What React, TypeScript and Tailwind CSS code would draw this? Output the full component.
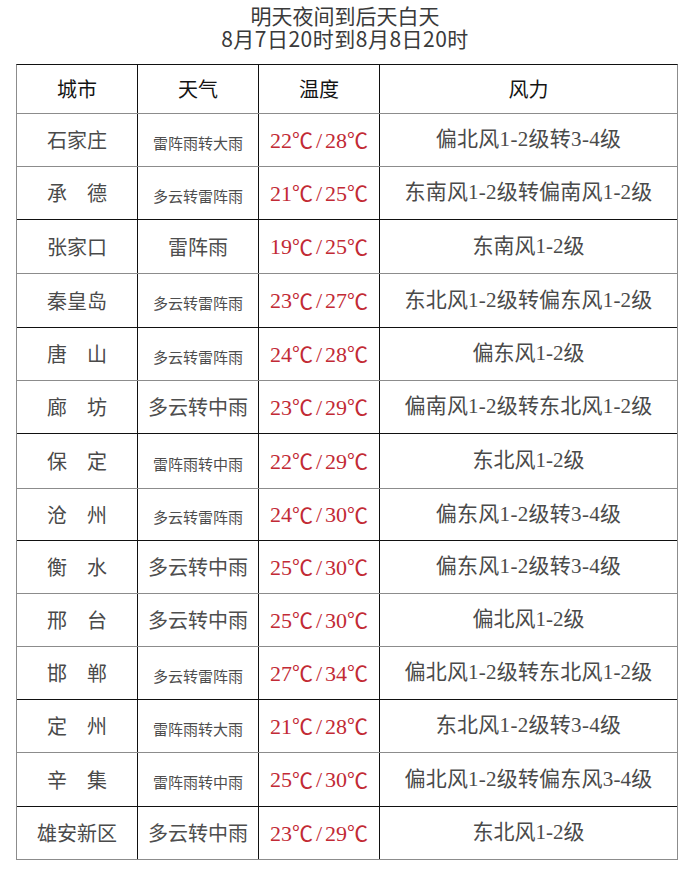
import React from "react";

type Row = {
  city: string;
  weather: string;
  small: boolean;
  lo: string;
  hi: string;
  wind: string;
  track: string;
  h: string;
  line: string;
};

const rows: Row[] = [
  { city: "石家庄", weather: "雷阵雨转大雨", small: true, lo: "22", hi: "28", wind: "偏北风1-2级转3-4级", track: "tracking-[0.3px]", h: "h-[53px]", line: "border-[#8c8c8c]" },
  { city: "承　德", weather: "多云转雷阵雨", small: true, lo: "21", hi: "25", wind: "东南风1-2级转偏南风1-2级", track: "tracking-[0.2px]", h: "h-[53px]", line: "border-[#111111]" },
  { city: "张家口", weather: "雷阵雨", small: false, lo: "19", hi: "25", wind: "东南风1-2级", track: "tracking-[0px]", h: "h-[54px]", line: "border-[#8c8c8c]" },
  { city: "秦皇岛", weather: "多云转雷阵雨", small: true, lo: "23", hi: "27", wind: "东北风1-2级转偏东风1-2级", track: "tracking-[0.2px]", h: "h-[54px]", line: "border-[#111111]" },
  { city: "唐　山", weather: "多云转雷阵雨", small: true, lo: "24", hi: "28", wind: "偏东风1-2级", track: "tracking-[0px]", h: "h-[53px]", line: "border-[#8c8c8c]" },
  { city: "廊　坊", weather: "多云转中雨", small: false, lo: "23", hi: "29", wind: "偏南风1-2级转东北风1-2级", track: "tracking-[0.2px]", h: "h-[53px]", line: "border-[#111111]" },
  { city: "保　定", weather: "雷阵雨转中雨", small: true, lo: "22", hi: "29", wind: "东北风1-2级", track: "tracking-[0px]", h: "h-[55px]", line: "border-[#8c8c8c]" },
  { city: "沧　州", weather: "多云转雷阵雨", small: true, lo: "24", hi: "30", wind: "偏东风1-2级转3-4级", track: "tracking-[0.3px]", h: "h-[52px]", line: "border-[#111111]" },
  { city: "衡　水", weather: "多云转中雨", small: false, lo: "25", hi: "30", wind: "偏东风1-2级转3-4级", track: "tracking-[0.3px]", h: "h-[53px]", line: "border-[#8c8c8c]" },
  { city: "邢　台", weather: "多云转中雨", small: false, lo: "25", hi: "30", wind: "偏北风1-2级", track: "tracking-[0px]", h: "h-[53px]", line: "border-[#8c8c8c]" },
  { city: "邯　郸", weather: "多云转雷阵雨", small: true, lo: "27", hi: "34", wind: "偏北风1-2级转东北风1-2级", track: "tracking-[0.2px]", h: "h-[53px]", line: "border-[#111111]" },
  { city: "定　州", weather: "雷阵雨转大雨", small: true, lo: "21", hi: "28", wind: "东北风1-2级转3-4级", track: "tracking-[0.3px]", h: "h-[53px]", line: "border-[#8c8c8c]" },
  { city: "辛　集", weather: "雷阵雨转中雨", small: true, lo: "25", hi: "30", wind: "偏北风1-2级转偏东风3-4级", track: "tracking-[0.2px]", h: "h-[54px]", line: "border-[#111111]" },
  { city: "雄安新区", weather: "多云转中雨", small: false, lo: "23", hi: "29", wind: "东北风1-2级", track: "tracking-[0px]", h: "h-[53px]", line: "border-[#8c8c8c]" },
];

const cjk = "font-['Noto_Sans_CJK_SC',sans-serif]";
const mixed = "font-['Liberation_Serif','Noto_Sans_CJK_SC',serif]";

function Deg() {
  return <span className="font-['Noto_Sans_CJK_SC',sans-serif] text-[21px]">℃</span>;
}

export default function App() {
  return (
    <div className="w-[690px] h-[892px] bg-white overflow-hidden">
      <div className={`pt-[4px] flex flex-col items-center text-[21px] leading-[23px] text-[#3a3a3a] ${cjk}`}>
        <div>明天夜间到后天白天</div>
        <div className="tracking-[0.5px]">8月7日20时到8月8日20时</div>
      </div>
      <div className="mt-[14px] ml-[16px] w-[662px] border-t border-l border-r border-t-[#111111] border-l-[#8c8c8c] border-r-[#8c8c8c]">
        <div className={`flex h-[49px] border-b border-[#8c8c8c] text-[20px] text-[#141414] ${cjk}`}>
          <div className="w-[121px] border-r border-[#111111] flex items-center justify-center">城市</div>
          <div className="w-[121px] border-r border-[#111111] flex items-center justify-center">天气</div>
          <div className="w-[121px] border-r border-[#111111] flex items-center justify-center">温度</div>
          <div className="flex-1 flex items-center justify-center">风力</div>
        </div>
        {rows.map((r, i) => (
          <div key={i} className={`flex ${r.h} border-b ${r.line}`}>
            <div className={`w-[121px] border-r border-[#111111] flex items-center justify-center text-[20px] text-[#4a4a4a] ${cjk}`}>
              {r.city}
            </div>
            <div
              className={`w-[121px] border-r border-[#111111] flex items-center justify-center text-[#4e4e4e] ${cjk} ${
                r.small ? "text-[15px] pt-[6px]" : "text-[20px]"
              }`}
            >
              {r.weather}
            </div>
            <div className={`w-[121px] border-r border-[#111111] flex items-center justify-center text-[22px] text-[#c22a35] ${mixed}`}>
              <span>{r.lo}</span>
              <Deg />
              <span className="px-[3px]">/</span>
              <span>{r.hi}</span>
              <Deg />
            </div>
            <div className={`flex-1 flex items-center justify-center text-[21px] text-[#4a4a4a] ${mixed} ${r.track}`}>
              {r.wind}
            </div>
          </div>
        ))}
      </div>
    </div>
  );
}
